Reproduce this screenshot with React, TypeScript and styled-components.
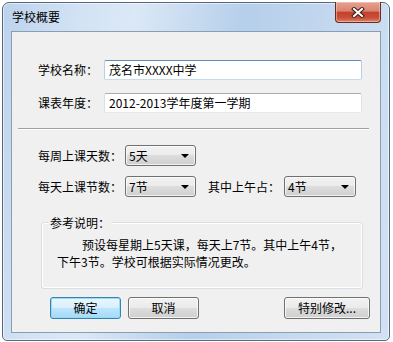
import React from "react";
import styled, { createGlobalStyle } from "styled-components";

const GlobalStyle = createGlobalStyle`
  html, body {
    margin: 0;
    padding: 0;
    background: #ffffff;
  }
  body {
    font-family: "Noto Sans CJK SC", "Noto Sans", "Liberation Sans", sans-serif;
    font-size: 12px;
    color: #000;
  }
`;

export default function App() {
  return (
    <>
      <GlobalStyle />
      <Page>
        <Window>
          <TitleBar>
            <Title>学校概要</Title>
            <CloseButton>
              <svg width="14" height="11" viewBox="0 0 14 11">
                <path d="M3 2 L11 9 M11 2 L3 9" stroke="#3a1d18" strokeWidth="4" strokeLinecap="square" />
                <path d="M3 2 L11 9 M11 2 L3 9" stroke="#ffffff" strokeWidth="2" strokeLinecap="square" />
              </svg>
            </CloseButton>
          </TitleBar>
          <Client>
            <FieldRow $top={28}>
              <Label $width={66}>学校名称：</Label>
              <TextBox $focused>茂名市XXXX中学</TextBox>
            </FieldRow>
            <FieldRow $top={13}>
              <Label $width={66}>课表年度：</Label>
              <TextBox>2012-2013学年度第一学期</TextBox>
            </FieldRow>
            <Separator />
            <FieldRow $top={15}>
              <Label $width={87}>每周上课天数：</Label>
              <Combo $width={71}>
                <span>5天</span>
                <Arrow />
              </Combo>
            </FieldRow>
            <FieldRow $top={10}>
              <Label $width={87}>每天上课节数：</Label>
              <Combo $width={71}>
                <span>7节</span>
                <Arrow />
              </Combo>
              <Label $width={76} $left={12}>
                其中上午占：
              </Label>
              <Combo $width={72}>
                <span>4节</span>
                <Arrow />
              </Combo>
            </FieldRow>
            <GroupBox>
              <GroupLegend>参考说明：</GroupLegend>
              <GroupText>
                <FirstLine>预设每星期上5天课，每天上7节。其中上午4节，</FirstLine>
                <div>下午3节。学校可根据实际情况更改。</div>
              </GroupText>
            </GroupBox>
            <ButtonRow>
              <Button $default $width={71}>确定</Button>
              <Button $width={71}>取消</Button>
              <Spacer />
              <Button $width={86}>特别修改...</Button>
            </ButtonRow>
          </Client>
        </Window>
      </Page>
    </>
  );
}

const Page = styled.div`
  width: 393px;
  height: 342px;
  padding: 2px 0 0 2px;
  box-sizing: border-box;
`;

const Window = styled.div`
  width: 388px;
  height: 339px;
  box-sizing: border-box;
  border: 1px solid #56687e;
  border-radius: 7px 7px 5px 5px;
  padding: 0 8px 7px 8px;
  display: flex;
  flex-direction: column;
  background: linear-gradient(
    100deg,
    #bcd2ec 0%,
    #d3e3f4 18%,
    #dbe8f6 30%,
    #b6cfea 55%,
    #c4d8ef 75%,
    #d2e2f3 100%
  );
  box-shadow: inset 0 0 0 1px rgba(255, 255, 255, 0.55);
`;

const TitleBar = styled.div`
  height: 28px;
  display: flex;
  justify-content: space-between;
  align-items: flex-start;
`;

const Title = styled.div`
  margin-left: 1px;
  padding-top: 7px;
  line-height: 14px;
  font-size: 12px;
  color: #000;
`;

const CloseButton = styled.div`
  width: 46px;
  height: 21px;
  margin-top: -1px;
  box-sizing: border-box;
  border: 1px solid #6a2a20;
  border-top: none;
  border-radius: 0 0 4px 4px;
  display: flex;
  align-items: center;
  justify-content: center;
  background: linear-gradient(
    to bottom,
    #e7a290 0%,
    #d98470 45%,
    #c4412c 52%,
    #c9503a 80%,
    #dc8a6e 100%
  );
  box-shadow: inset 0 0 0 1px rgba(255, 210, 200, 0.5);
`;

const Client = styled.div`
  flex: 1;
  box-sizing: border-box;
  border: 1px solid #8b9db3;
  background: #f0f0f0;
  display: flex;
  flex-direction: column;
  padding: 0 0 0 0;
`;

const FieldRow = styled.div<{ $top: number }>`
  display: flex;
  align-items: center;
  margin-top: ${(p) => p.$top}px;
  padding-left: 26px;
`;

const Label = styled.div<{ $width: number; $left?: number }>`
  width: ${(p) => p.$width}px;
  margin-left: ${(p) => p.$left ?? 0}px;
  flex-shrink: 0;
  line-height: 16px;
  white-space: nowrap;
`;

const TextBox = styled.div<{ $focused?: boolean }>`
  width: 258px;
  height: 20px;
  box-sizing: border-box;
  background: #fff;
  padding: 0 4px;
  line-height: 18px;
  white-space: nowrap;
  border: 1px solid;
  border-radius: 2px;
  border-color: ${(p) =>
    p.$focused
      ? "#5b8dbd #b7d0e8 #c5dbee #b7d0e8"
      : "#abadb3 #e2e3ea #e3e9ef #dbdfe6"};
`;

const Separator = styled.div`
  margin: 15px 11px 0 6px;
  height: 1px;
  background: #a0a0a0;
  border-bottom: 1px solid #ffffff;
`;

const Combo = styled.div<{ $width: number }>`
  width: ${(p) => p.$width}px;
  height: 21px;
  box-sizing: border-box;
  border: 1px solid #707070;
  border-radius: 3px;
  display: flex;
  align-items: center;
  justify-content: space-between;
  padding: 0 6px 0 3px;
  line-height: 16px;
  background: linear-gradient(
    to bottom,
    #f2f2f2 0%,
    #ebebeb 49%,
    #dddddd 50%,
    #cfcfcf 100%
  );
  box-shadow: inset 0 0 0 1px rgba(255, 255, 255, 0.7);
`;

const Arrow = styled.span`
  width: 0;
  height: 0;
  border-left: 4px solid transparent;
  border-right: 4px solid transparent;
  border-top: 4px solid #000;
  margin-top: 1px;
`;

const GroupBox = styled.div`
  position: relative;
  margin: 25px 0 0 29px;
  width: 322px;
  height: 67px;
  box-sizing: border-box;
  border: 1px solid #d5dfe5;
  border-radius: 3px;
  box-shadow: inset 0 0 0 1px #ffffff;
`;

const GroupLegend = styled.div`
  position: absolute;
  left: 6px;
  top: -8px;
  padding: 0 2px;
  line-height: 16px;
  background: #f0f0f0;
`;

const GroupText = styled.div`
  padding: 13px 0 0 15px;
  line-height: 17px;
  white-space: nowrap;
`;

const FirstLine = styled.div`
  padding-left: 25px;
`;

const ButtonRow = styled.div`
  display: flex;
  gap: 7px;
  margin: 8px 0 0 38px;
  width: 320px;
`;

const Spacer = styled.div`
  flex: 1;
`;

const Button = styled.div<{ $default?: boolean; $width: number }>`
  width: ${(p) => p.$width}px;
  height: 22px;
  box-sizing: border-box;
  border-radius: 3px;
  display: flex;
  align-items: center;
  justify-content: center;
  line-height: 16px;
  border: 1px solid ${(p) => (p.$default ? "#3c7fb1" : "#707070")};
  background: ${(p) =>
    p.$default
      ? "linear-gradient(to bottom, #eaf6fd 0%, #d9f0fc 49%, #bee6fd 50%, #a7d9f5 100%)"
      : "linear-gradient(to bottom, #f2f2f2 0%, #ebebeb 49%, #dddddd 50%, #cfcfcf 100%)"};
  box-shadow: ${(p) =>
    p.$default
      ? "inset 0 0 0 1px #8ee0f9"
      : "inset 0 0 0 1px rgba(255, 255, 255, 0.75)"};
`;
